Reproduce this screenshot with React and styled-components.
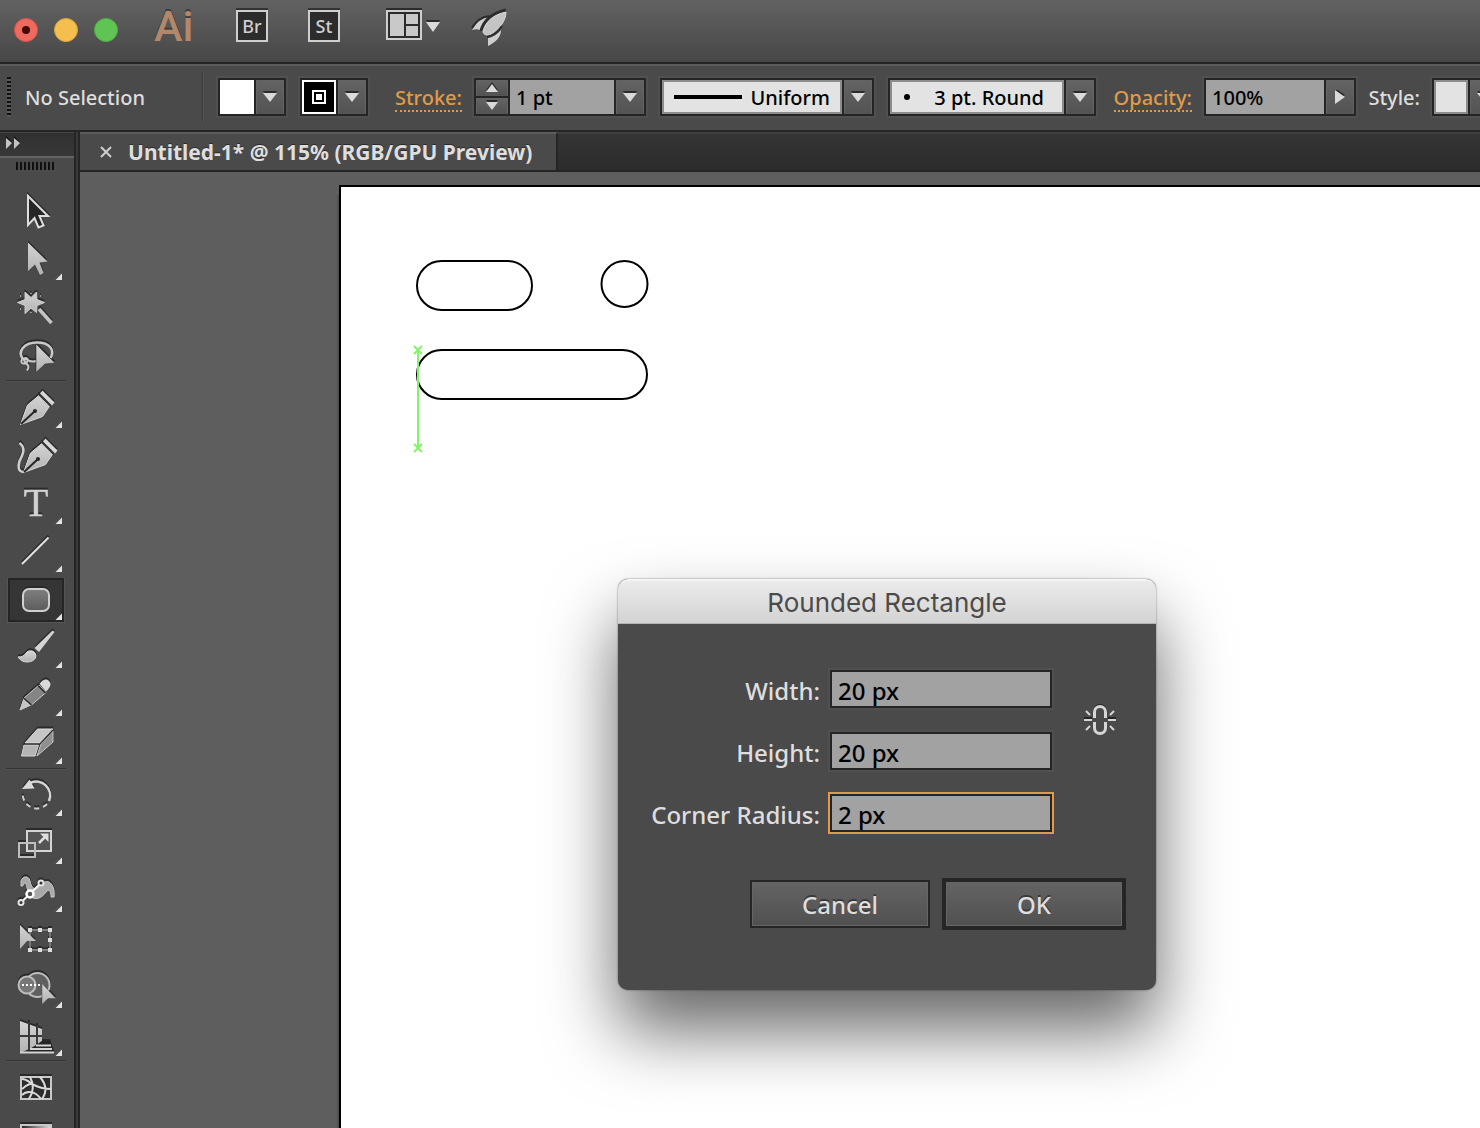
import React from "react";
import styled, { createGlobalStyle, css } from "styled-components";

const c = {
  panel: "#4a4a4a",
  edge: "#252525",
  lift: "#5c5c5c",
  field: "#a2a2a2",
  text: "#dedede",
  accent: "#e09a4a",
};

const Global = createGlobalStyle`
  *, *::before, *::after { box-sizing: border-box; }
  body {
    margin: 0;
    background: #5e5e5e;
    color: ${c.text};
    font-family: "Noto Sans", "Open Sans", sans-serif;
    font-size: 20px;
    font-weight: 500;
  }
  button, input, select { font: inherit; margin: 0; border-radius: 0; }
`;

const Shell = styled.div`
  display: flex;
  flex-direction: column;
  height: 100vh;
  overflow: hidden;
`;

/* ---------- application bar ---------- */

const AppBar = styled.header`
  display: flex;
  flex: none;
  align-items: flex-start;
  height: 64px;
  padding-left: 14px;
  background: linear-gradient(#626262, #474747);
  border-bottom: 2px solid ${c.edge};
`;

const Lights = styled.div`
  display: flex;
  gap: 16px;
  padding-top: 18px;
`;

const Light = styled.button`
  display: grid;
  place-items: center;
  width: 24px;
  height: 24px;
  padding: 0;
  border: 1px solid ${(p) => p.$rim};
  border-radius: 50%;
  background: ${(p) => p.$fill};
`;

const Dot = styled.span`
  width: 8px;
  height: 8px;
  border-radius: 50%;
  background: #460804;
`;

const Logo = styled.div`
  width: 82px;
  padding-left: 36px;
  margin-right: 36px;
  color: #b3876a;
  font-family: Roboto, sans-serif;
  font-size: 43px;
  font-weight: 500;
  line-height: 52px;
  text-shadow: 0 -2px 0 #3e3e3e;
`;

const AppTile = styled.button`
  width: 32px;
  height: 32px;
  margin: 10px 40px 0 0;
  padding: 0;
  border: 2px solid #cfcfcf;
  background: #2c2c2c;
  box-shadow: 0 -2px 0 #333;
  color: #cfcfcf;
  font-size: 18px;
  line-height: 28px;
`;

const BarIcon = styled.button`
  display: block;
  height: 62px;
  margin-right: ${(p) => p.$after || 0}px;
  padding: 0;
  border: 0;
  background: none;
  svg { display: block; }
`;

/* ---------- control bar ---------- */

const ControlBar = styled.section`
  display: flex;
  flex: none;
  align-items: center;
  gap: 14px;
  height: 68px;
  padding-bottom: 2px;
  padding-left: 7px;
  overflow: hidden;
  background: ${c.panel};
  border-top: 2px solid ${c.lift};
  border-bottom: 2px solid ${c.edge};
  white-space: nowrap;
`;

const BarGrip = styled.span`
  flex: none;
  width: 4px;
  height: 40px;
  background: repeating-linear-gradient(#111 0 2px, #5a5a5a 2px 4px);
`;

const Status = styled.span`
  flex: none;
  width: 164px;
`;

const Divider = styled.span`
  flex: none;
  width: 2px;
  height: 50px;
  margin-left: -1px;
  background: #3c3c3c;
  border-right: 1px solid #555;
`;

const Labelled = styled.div`
  display: flex;
  flex: none;
  align-items: center;
  gap: 12px;
`;

const BarText = styled.span`
  display: flex;
  justify-content: flex-end;
  width: ${(p) => p.$w}px;
`;

const BarLink = styled.a`
  padding-top: 3px;
  color: ${c.accent};
  line-height: 24px;
  text-decoration: none;
  border-bottom: 2px dotted ${c.accent};
`;

const Combo = styled.div`
  display: flex;
  flex: none;
  height: 38px;
  border: 2px solid ${c.edge};
  background: ${c.edge};
  gap: 2px;
  box-shadow: 0 0 0 2px #505050;
`;

const raised = css`
  border: 1px solid #646464;
  border-bottom-color: #545454;
  background: linear-gradient(#636363, #535353);
`;

const Drop = styled.button`
  ${raised}
  display: grid;
  place-items: center;
  flex: none;
  width: 28px;
  height: 34px;
  padding: 0;
`;

const Swatch = styled.button`
  display: grid;
  place-items: center;
  width: 34px;
  height: 34px;
  padding: 0;
  border: 2px solid ${(p) => p.$rim};
  background: ${(p) => p.$fill};
`;

const StrokeMark = styled.span`
  width: 14px;
  height: 14px;
  background: #fff;
  border: 2px solid #fff;
  box-shadow: inset 0 0 0 2px #000;
`;

const BarInput = styled.input`
  width: ${(p) => p.$w}px;
  height: 34px;
  padding: 0 6px;
  border: 0;
  outline: 0;
  background: ${c.field};
  color: #000;
`;

const Stepper = styled.div`
  display: grid;
  gap: 2px;
  width: 32px;
`;

const Step = styled.button`
  ${raised}
  display: grid;
  place-items: center;
  height: 16px;
  padding: 0;
`;

const SelectField = styled.label`
  display: flex;
  align-items: center;
  width: ${(p) => p.$w}px;
  height: 34px;
  padding-left: ${(p) => p.$pad}px;
  border: 2px solid #8c8c8c;
  background: #e3e3e3;
`;

const Select = styled.select`
  flex: 1;
  min-width: 0;
  height: 30px;
  padding: 0 ${(p) => p.$right}px 0 0;
  border: 0;
  outline: 0;
  appearance: none;
  background: none;
  color: #000;
  text-align: right;
  text-align-last: right;
`;

const ProfileLine = styled.span`
  width: 68px;
  height: 4px;
  background: #000;
`;

const BrushDot = styled.span`
  width: 6px;
  height: 6px;
  border-radius: 50%;
  background: #000;
`;

/* ---------- work area ---------- */

const Work = styled.div`
  display: flex;
  flex: 1;
  min-height: 0;
`;

const Toolbox = styled.aside`
  flex: none;
  width: 80px;
  overflow: hidden;
  background: ${c.panel};
  border-right: 2px solid ${c.edge};
  box-shadow: inset -2px 0 0 #393939, inset -4px 0 0 ${c.edge};
`;

const Collapse = styled.button`
  display: flex;
  align-items: flex-start;
  width: 74px;
  height: 24px;
  padding: 3px 5px;
  border: 0;
  border-top: 1px solid #444;
  background: linear-gradient(#303030, #383838);
`;

const GripRow = styled.div`
  width: 74px;
  height: 32px;
  padding: 4px 0 0 16px;
  border-top: 2px solid #636363;
`;

const Grip = styled.span`
  display: block;
  width: 38px;
  height: 8px;
  background: repeating-linear-gradient(90deg, #111 0 2px, #4a4a4a 2px 4px);
`;

const ToolGroup = styled.div`
  display: flex;
  flex-direction: column;
  & + &::before {
    content: "";
    height: 2px;
    margin: 0 12px 2px 6px;
    background: #333;
    border-bottom: 1px solid #525252;
  }
`;

const Tool = styled.button`
  flex: none;
  width: 72px;
  height: 48px;
  padding: 0;
  border: 0;
  background: none;
  svg { display: block; }
  .ink { filter: drop-shadow(0 -2px 0 #2a2a2a); }
`;

const Document = styled.main`
  display: flex;
  flex: 1;
  flex-direction: column;
  min-width: 0;
`;

const Tabs = styled.nav`
  display: flex;
  flex: none;
  height: 40px;
  background: linear-gradient(#343434, #2c2c2c);
  border-top: 2px solid #404040;
  border-bottom: 2px solid ${c.edge};
`;

const Tab = styled.div`
  display: flex;
  align-items: center;
  gap: 16px;
  width: 478px;
  margin-top: -2px;
  padding-left: 20px;
  border-top: 2px solid ${c.lift};
  border-right: 2px solid ${c.edge};
  background: ${c.panel};
  font-size: 21px;
  font-weight: 700;
  white-space: nowrap;
  text-shadow: 0 -1px 0 #2a2a2a;
`;

const CloseTab = styled.button`
  display: grid;
  place-items: center;
  width: 12px;
  height: 12px;
  padding: 0;
  border: 0;
  background: none;
`;

const Canvas = styled.div`
  position: relative;
  display: flex;
  flex: 1;
  min-height: 0;
  padding: 13px 0 0 259px;
  overflow: hidden;
  background: #5e5e5e;
`;

const Artboard = styled.div`
  flex: 1;
  border: 2px solid #000;
  border-width: 2px 0 0 2px;
  background: #fff;
  box-shadow: -2px 10px 0 #505050;
  svg { display: block; }
`;

/* ---------- dialog ---------- */

const Dialog = styled.form`
  position: absolute;
  top: 407px;
  left: 538px;
  width: 538px;
  border-radius: 10px;
  background: ${c.panel};
  box-shadow: 0 0 2px rgba(0, 0, 0, 0.5), 0 40px 70px rgba(0, 0, 0, 0.6);
`;

const DialogTitle = styled.h1`
  height: 45px;
  margin: 0;
  border-top: 2px solid #f4f4f4;
  border-bottom: 1px solid #b4b4b4;
  border-radius: 10px 10px 0 0;
  background: linear-gradient(#ebebeb, #d3d3d3);
  color: #4b4b4b;
  font-family: Inter, Roboto, sans-serif;
  font-size: 26px;
  font-weight: 400;
  line-height: 44px;
  text-align: center;
`;

const DialogBody = styled.div`
  display: flex;
  justify-content: flex-end;
  gap: 32px;
  padding: 46px 40px 0 0;
`;

const Fields = styled.div`
  display: grid;
  grid-template-columns: auto 222px;
  align-items: center;
  gap: 24px 10px;
`;

const FieldLabel = styled.label`
  padding-top: 4px;
  font-size: 24px;
  line-height: 34px;
  text-align: right;
`;

const FieldInput = styled.input`
  width: 100%;
  height: 38px;
  padding: 2px 6px 0;
  border: 2px solid ${c.edge};
  outline: 0;
  background: ${c.field};
  box-shadow: 0 0 0 2px ${(p) => (p.$active ? c.accent : "#505050")};
  color: #000;
  font-size: 24px;
`;

const LinkToggle = styled.button`
  width: 32px;
  height: 32px;
  margin-top: 34px;
  padding: 0;
  border: 0;
  background: none;
  svg { display: block; }
`;

const Actions = styled.div`
  display: flex;
  align-items: center;
  justify-content: flex-end;
  gap: 12px;
  padding: 46px 30px 60px 0;
`;

const Action = styled.button`
  width: ${(p) => (p.$primary ? 184 : 180)}px;
  height: ${(p) => (p.$primary ? 52 : 48)}px;
  padding: 0;
  border: ${(p) => (p.$primary ? 4 : 2)}px solid ${c.edge};
  background: linear-gradient(#646464, #505050);
  box-shadow: inset 0 0 0 1px #666;
  color: ${c.text};
  font-size: 24px;
  text-shadow: 0 -2px 0 #3a3a3a;
`;

/* ---------- drawings ---------- */

const Tri = ({ d = "M0 2h14l-7 9z", w = 14, h = 12 }) => (
  <svg width={w} height={h} viewBox={`0 0 ${w} ${h}`} aria-hidden="true">
    <path d={d} fill="#2b2b2b" transform="translate(0 -2)" />
    <path d={d} fill="#dadada" />
  </svg>
);

const smallUp = "M0 10h12l-6-8z";
const smallDown = "M0 2h12l-6 8z";

const nib = (
  <>
    <path d="M20.500 40.500 27.500 21 39.500 11 50 21.500 42.500 32.500z" fill="url(#metal)" stroke="#dcdcdc" strokeWidth="1" />
    <path d="M38.500 10 51 22.500" stroke="#2a2a2a" strokeWidth="1.500" />
    <path d="M42.500 6.500 54.500 18.500 52 21.500 40 9.500z" fill="#d8d8d8" />
    <path d="M21 40 35 27" stroke="#262626" strokeWidth="2" />
    <circle cx="35" cy="27" r="2" fill="#262626" />
  </>
);

const icons = {
  selection: (
    <path d="M28 8v29l6.500-7 4 9.500 5-2-4-9.500H48z" fill="#262626" stroke="#dedede" strokeWidth="2" />
  ),
  direct: <path d="M28 6.500V35l7-6.500L40 39l3.500-2-4-10.500 8-1z" fill="url(#metal)" />,
  wand: (
    <>
      <path
        d="M25 8 31 13.500 36.500 8 37 15.500 44.500 18.500 37 21.500 36.500 28.500 31 24 25 29.500 25 21.500 17.500 18.500 25 15.500z"
        fill="url(#metal)" stroke="#cfcfcf" strokeWidth="1"
      />
      <path d="M31 9v1M31 28v1M20 12h1M40 12h1M20 25h1" stroke="#b0b0b0" strokeWidth="1.500" />
      <path d="M39 25 51.500 39" stroke="#c4c4c4" strokeWidth="3.500" />
    </>
  ),
  lasso: (
    <>
      <path d="M24 28C16 20 24 10.500 37 10.500S55 18 50.500 26" fill="none" stroke="#c9c9c9" strokeWidth="2.500" />
      <path d="M36 29c-5 2-7-1-11-2s-5 4-1.500 4.500S29 28 27 26.500s-4.500 1-1.500 4 4 4 1.500 8" fill="none" stroke="#c9c9c9" strokeWidth="2" />
      <path d="M36 12v28.500l9-8.500 10-1z" fill="url(#metal)" stroke="#333" strokeWidth="0.600" />
    </>
  ),
  pen: nib,
  curvature: (
    <>
      <g transform="translate(3 0)">{nib}</g>
      <path d="M19.500 11c7 5 3 12 0 18-2 6-1 11 4 11" fill="none" stroke="#cfcfcf" strokeWidth="2.500" />
    </>
  ),
  type: (
    <text x="36" y="36" textAnchor="middle" fontFamily="Liberation Serif, serif" fontSize="40" stroke="#d2d2d2" strokeWidth="0.600" fill="#d2d2d2">
      T
    </text>
  ),
  line: <path d="M22 36 48.500 9.500" stroke="#e2e2e2" strokeWidth="2" />,
  rounded: <rect x="23" y="13" width="26" height="22" rx="6" fill="url(#dim)" stroke="#d0d0d0" strokeWidth="2" />,
  brush: (
    <>
      <path d="M52.500 6.500 54.500 8 39 28 34.500 24z" fill="#d4d4d4" />
      <path d="M18 33c4 0 6-1 8-4s7-3 9 0c3 6-3 9-8 9-4 0-7-2-9-5z" fill="url(#metal)" stroke="#dcdcdc" strokeWidth="1" />
    </>
  ),
  pencil: (
    <>
      <path d="M20 38 24 26 39 13 46 20.500 32 32.500z" fill="#858585" stroke="#c9c9c9" strokeWidth="1" />
      <path d="M20 38 24 26 31.500 33z" fill="#c6c6c6" />
      <path d="M23.500 26 31.500 33M38 13.500 45.500 21" stroke="#2a2a2a" strokeWidth="1.500" />
      <path d="M39.500 12C42 8 46 6 49 9s1 7-3 10.500z" fill="#dadada" />
    </>
  ),
  eraser: (
    <>
      <path d="M25 23 37.500 9H53L40 23z" fill="#c6c6c6" stroke="#dedede" strokeWidth="1" />
      <path d="M24 25H38.500L35 36H21.500z" fill="#b4b4b4" stroke="#d4d4d4" strokeWidth="1" />
      <path d="M53 11V22L37 36 41 24z" fill="#8f8f8f" stroke="#c6c6c6" strokeWidth="1" />
      <path d="M24 24H40L53 10" fill="none" stroke="#2a2a2a" strokeWidth="1.200" />
    </>
  ),
  rotate: (
    <>
      <path d="M30 11a14 14 0 0 1 19 18" fill="none" stroke="#d4d4d4" strokeWidth="2.500" />
      <path d="M47 32a14 14 0 0 1-24-12" fill="none" stroke="#d0d0d0" strokeWidth="2" strokeDasharray="5 4" />
      <path d="M22 17 29.500 7.500 34.500 16.500z" fill="#dadada" />
    </>
  ),
  scale: (
    <>
      <rect x="27" y="11" width="24" height="20" fill="#555" stroke="#d4d4d4" strokeWidth="2" />
      <rect x="19" y="23" width="16" height="14" fill="none" stroke="#bdbdbd" strokeWidth="2" />
      <path d="M39 23 45 17" stroke="#dedede" strokeWidth="2.500" />
      <path d="M40 13.500h8.500V22z" fill="#dedede" />
    </>
  ),
  warp: (
    <>
      <path
        d="M21 13c1-5 8-6 9 0 1 5 4 10 8 7 3-3 6-8 11-6 4 2 6 9 5 15h-3c0-6-2-8-4-6-4 5-8 9-14 7-7-2-5-14-8-15-2 0-1 4-4 3z"
        fill="#a9a9a9" stroke="#c9c9c9" strokeWidth="1"
      />
      <path d="M21 34.500 41 15" stroke="#fff" strokeWidth="2" />
      <circle cx="21" cy="34.500" r="2.500" fill="#333" stroke="#e4e4e4" strokeWidth="2" />
      <circle cx="30" cy="26" r="3.500" fill="#555" stroke="#fff" strokeWidth="2.500" />
      <circle cx="41" cy="15" r="2.500" fill="#333" stroke="#e4e4e4" strokeWidth="2" />
    </>
  ),
  transform: (
    <>
      <rect x="30" y="14" width="20" height="20" fill="none" stroke="#909090" strokeWidth="1.500" />
      <path
        d="M28 12h4v4h-4zM38 12h4v4h-4zM48 12h4v4h-4zM48 22h4v4h-4zM48 32h4v4h-4zM38 32h4v4h-4zM28 32h4v4h-4z"
        fill="#dedede"
      />
      <path d="M20 9v24l7-8h9z" fill="url(#metal)" />
    </>
  ),
  builder: (
    <>
      <circle cx="37.500" cy="21" r="12" fill="#606060" stroke="#bdbdbd" strokeWidth="2" />
      <circle cx="27" cy="21" r="8.500" fill="#777" stroke="#bdbdbd" strokeWidth="2" />
      <path d="M22 21h20" stroke="#fff" strokeWidth="2" strokeDasharray="2 2" />
      <path d="M42 19.500v21l6-6h8z" fill="url(#metal)" stroke="#4a4a4a" strokeWidth="0.500" />
    </>
  ),
  perspective: (
    <>
      <path d="M20 9 42 17V29L36 34 20 41z" fill="url(#metal)" />
      <path d="M29 10v27M37 13v20M20 24h22" stroke="#3a3a3a" strokeWidth="2" />
      <path d="M42 29h8L54 41H24z" fill="#262626" />
      <path d="M36 33.500h15M30 37h22" stroke="#d4d4d4" strokeWidth="1.800" />
      <path d="M20 40.500h34" stroke="#d4d4d4" strokeWidth="2" />
    </>
  ),
  mesh: (
    <>
      <rect x="21" y="13" width="30" height="22" fill="#2c2c2c" stroke="#c8c8c8" strokeWidth="2" />
      <path
        d="M22 15c5 0 8 4 12 6s9 4 17 4M22 25c4-3 7-6 11-5M22 31c5-5 13-4 19 4M30 13c4 7 4 14-1 22M40 13c6 7 7 15 2 22"
        fill="none" stroke="#dadada" strokeWidth="2"
      />
    </>
  ),
  gradient: <rect x="21" y="13" width="30" height="22" fill="url(#fade)" stroke="#c8c8c8" strokeWidth="2" />,
};

const groups = [
  [["selection", "Selection"], ["direct", "Direct Selection", 1], ["wand", "Magic Wand"], ["lasso", "Lasso"]],
  [
    ["pen", "Pen", 1], ["curvature", "Curvature"], ["type", "Type", 1], ["line", "Line Segment", 1],
    ["rounded", "Rounded Rectangle", 1], ["brush", "Paintbrush", 1], ["pencil", "Pencil", 1], ["eraser", "Eraser", 1],
  ],
  [
    ["rotate", "Rotate", 1], ["scale", "Scale", 1], ["warp", "Width", 1], ["transform", "Free Transform"],
    ["builder", "Shape Builder", 1], ["perspective", "Perspective Grid", 1],
  ],
  [["mesh", "Mesh"], ["gradient", "Gradient"]],
];

const HiddenSvg = styled.svg`
  position: absolute;
`;

const Defs = () => (
  <HiddenSvg width="0" height="0" aria-hidden="true">
    <defs>
      <linearGradient id="metal" x1="0" y1="0" x2="0" y2="1">
        <stop offset="0" stopColor="#d4d4d4" />
        <stop offset="1" stopColor="#b2b2b2" />
      </linearGradient>
      <linearGradient id="dim" x1="0" y1="0" x2="0" y2="1">
        <stop offset="0" stopColor="#808080" />
        <stop offset="1" stopColor="#5c5c5c" />
      </linearGradient>
      <linearGradient id="fade">
        <stop offset="0" stopColor="#222" />
        <stop offset="1" stopColor="#ddd" />
      </linearGradient>
    </defs>
  </HiddenSvg>
);

function ToolButton({ id, label, more }) {
  const active = id === "rounded";
  return (
    <Tool type="button" aria-label={label} aria-pressed={active}>
      <svg width="72" height="48" viewBox="0 0 72 48" aria-hidden="true">
        {active && (
          <>
            <rect x="7" y="2" width="58" height="45" fill="#555" />
            <rect x="9" y="3" width="54" height="42" fill="#353535" stroke="#252525" strokeWidth="2" />
          </>
        )}
        <g className="ink">{icons[id]}</g>
        {more && <path d="M62 37.500V44h-6.500z" fill="#e4e4e4" />}
      </svg>
    </Tool>
  );
}

const Shapes = () => (
  <svg width="400" height="300" viewBox="341 187 400 300" role="img" aria-label="Drawn shapes">
    <g fill="none" stroke="#000" strokeWidth="2">
      <rect x="417" y="261" width="115" height="49" rx="24.500" />
      <circle cx="624.500" cy="284" r="23" />
      <rect x="417" y="350" width="230" height="49" rx="24.500" />
    </g>
    <path d="M418 350v98M414 346l8 8M422 346l-8 8M414 444l8 8M422 444l-8 8" stroke="#80f567" strokeWidth="2" />
  </svg>
);

export default function App() {
  return (
    <Shell>
      <Global />
      <Defs />
      <AppBar>
        <Lights>
          <Light type="button" aria-label="Close" $fill="#ee6a5f" $rim="#d9544a"><Dot /></Light>
          <Light type="button" aria-label="Minimize" $fill="#f5bf4f" $rim="#dba63a" />
          <Light type="button" aria-label="Zoom" $fill="#5fc454" $rim="#4fae42" />
        </Lights>
        <Logo>Ai</Logo>
        <AppTile type="button">Br</AppTile>
        <AppTile type="button">St</AppTile>
        <BarIcon type="button" aria-label="Arrange documents" $after={30}>
          <svg width="60" height="62" viewBox="380 0 60 62" aria-hidden="true">
            <path d="M386 8h36v4h-36z" fill="#2c2c2c" />
            <path d="M387 11h34v28h-34z" fill="#2c2c2c" stroke="#cfcfcf" strokeWidth="2" />
            <path d="M390 14h14v22h-14zM406 14h12v10h-12zM406 26h12v10h-12z" fill="#c9c9c9" />
            <path d="M426 20h14l-7 9z" fill="#2c2c2c" />
            <path d="M426 22h14l-7 10z" fill="#dadada" />
          </svg>
        </BarIcon>
        <BarIcon type="button" aria-label="GPU performance">
          <svg width="40" height="62" viewBox="470 0 40 62" aria-hidden="true">
            <path d="M489 17c-8 1-13 6-17 13 3-1 6-1 8 0 2-5 5-9 9-13zM501 30c0 7-5 12-13 16v-8c5-1 10-4 13-8z" fill="#cfcfcf" />
            <path d="M472 28c4-7 9-11 17-12" stroke="#2c2c2c" strokeWidth="2" fill="none" />
            <path d="M506 10c-13 3-22 9-25 21" stroke="#2c2c2c" strokeWidth="3" fill="none" />
            <path d="M506 12c0 8-6 17-15 22-4 2-8 1-8-3 3-10 10-16 23-19z" fill="#c4c4c4" stroke="#dcdcdc" strokeWidth="1" />
            <path d="M487 37c6-1 11-5 15-11" stroke="#2c2c2c" strokeWidth="2" fill="none" />
          </svg>
        </BarIcon>
      </AppBar>

      <ControlBar aria-label="Control">
        <BarGrip />
        <Status>No Selection</Status>
        <Divider />
        <Combo>
          <Swatch type="button" aria-label="Fill" $fill="#fff" $rim="#fff" />
          <Drop type="button" aria-label="Fill options"><Tri /></Drop>
        </Combo>
        <Combo>
          <Swatch type="button" aria-label="Stroke colour" $fill="#000" $rim="#fff"><StrokeMark /></Swatch>
          <Drop type="button" aria-label="Stroke options"><Tri /></Drop>
        </Combo>
        <Labelled>
          <BarText $w={80}><BarLink href="#stroke">Stroke:</BarLink></BarText>
          <Combo>
            <Stepper>
              <Step type="button" aria-label="Increase stroke"><Tri d={smallUp} w={12} /></Step>
              <Step type="button" aria-label="Decrease stroke"><Tri d={smallDown} w={12} /></Step>
            </Stepper>
            <BarInput $w={104} aria-label="Stroke weight" defaultValue="1 pt" />
            <Drop type="button" aria-label="Stroke weight presets"><Tri /></Drop>
          </Combo>
        </Labelled>
        <Combo>
          <SelectField $w={180} $pad={10}>
            <ProfileLine />
            <Select aria-label="Width profile" $right={10}><option>Uniform</option></Select>
          </SelectField>
          <Drop type="button" aria-label="Width profiles"><Tri /></Drop>
        </Combo>
        <Combo>
          <SelectField $w={174} $pad={12}>
            <BrushDot />
            <Select aria-label="Brush" $right={18}><option>3 pt. Round</option></Select>
          </SelectField>
          <Drop type="button" aria-label="Brushes"><Tri /></Drop>
        </Combo>
        <Labelled>
          <BarText $w={82}><BarLink href="#opacity">Opacity:</BarLink></BarText>
          <Combo>
            <BarInput $w={118} aria-label="Opacity" defaultValue="100%" />
            <Drop type="button" aria-label="Opacity slider"><Tri d="M2 0v14l10-7z" h={14} /></Drop>
          </Combo>
        </Labelled>
        <Labelled>
          <BarText $w={50}>Style:</BarText>
          <Combo>
            <Swatch type="button" aria-label="Graphic style" $fill="#e3e3e3" $rim="#8c8c8c" />
            <Drop type="button" aria-label="Graphic styles"><Tri /></Drop>
          </Combo>
        </Labelled>
      </ControlBar>

      <Work>
        <Toolbox aria-label="Tools">
          <Collapse type="button" aria-label="Expand panel">
            <svg width="18" height="14" viewBox="0 0 18 14" aria-hidden="true">
              <path d="M1 0l6 6-6 6zM9 0l6 6-6 6z" fill="#111" />
              <path d="M1 2l6 5-6 6zM9 2l6 5-6 6z" fill="#c4c4c4" />
            </svg>
          </Collapse>
          <GripRow><Grip /></GripRow>
          {groups.map((tools, i) => (
            <ToolGroup key={i}>
              {tools.map(([id, label, more]) => <ToolButton key={id} id={id} label={label} more={more} />)}
            </ToolGroup>
          ))}
        </Toolbox>

        <Document>
          <Tabs>
            <Tab>
              <CloseTab type="button" aria-label="Close document">
                <svg width="12" height="12" viewBox="0 0 12 12" aria-hidden="true">
                  <path d="M1 1l10 10M11 1L1 11" stroke="#cfcfcf" strokeWidth="2" />
                </svg>
              </CloseTab>
              Untitled-1* @ 115% (RGB/GPU Preview)
            </Tab>
          </Tabs>
          <Canvas>
            <Artboard><Shapes /></Artboard>
            <Dialog role="dialog" aria-labelledby="dlg-title" onSubmit={(e) => e.preventDefault()}>
              <DialogTitle id="dlg-title">Rounded Rectangle</DialogTitle>
              <DialogBody>
                <Fields>
                  <FieldLabel htmlFor="w">Width:</FieldLabel>
                  <FieldInput id="w" defaultValue="20 px" />
                  <FieldLabel htmlFor="h">Height:</FieldLabel>
                  <FieldInput id="h" defaultValue="20 px" />
                  <FieldLabel htmlFor="r">Corner Radius:</FieldLabel>
                  <FieldInput id="r" defaultValue="2 px" $active />
                </Fields>
                <LinkToggle type="button" aria-label="Constrain proportions">
                  <svg width="32" height="32" viewBox="0 0 32 32" aria-hidden="true">
                    <g fill="none" stroke="#262626" strokeWidth="2">
                      <path d="M10 12V7a6 6 0 0 1 12 0v5M0 14h8M24 14h8" />
                    </g>
                    <g fill="none" stroke="#d6d6d6">
                      <path d="M10.500 14V8a5.500 5.500 0 0 1 11 0v6M10.500 18v6a5.500 5.500 0 0 0 11 0v-6" strokeWidth="3" />
                      <path d="M0 16h8M24 16h8M2 7l4 4M30 7l-4 4M2 26l4-4M30 26l-4-4" strokeWidth="2" />
                    </g>
                  </svg>
                </LinkToggle>
              </DialogBody>
              <Actions>
                <Action type="button">Cancel</Action>
                <Action type="submit" $primary>OK</Action>
              </Actions>
            </Dialog>
          </Canvas>
        </Document>
      </Work>
    </Shell>
  );
}
